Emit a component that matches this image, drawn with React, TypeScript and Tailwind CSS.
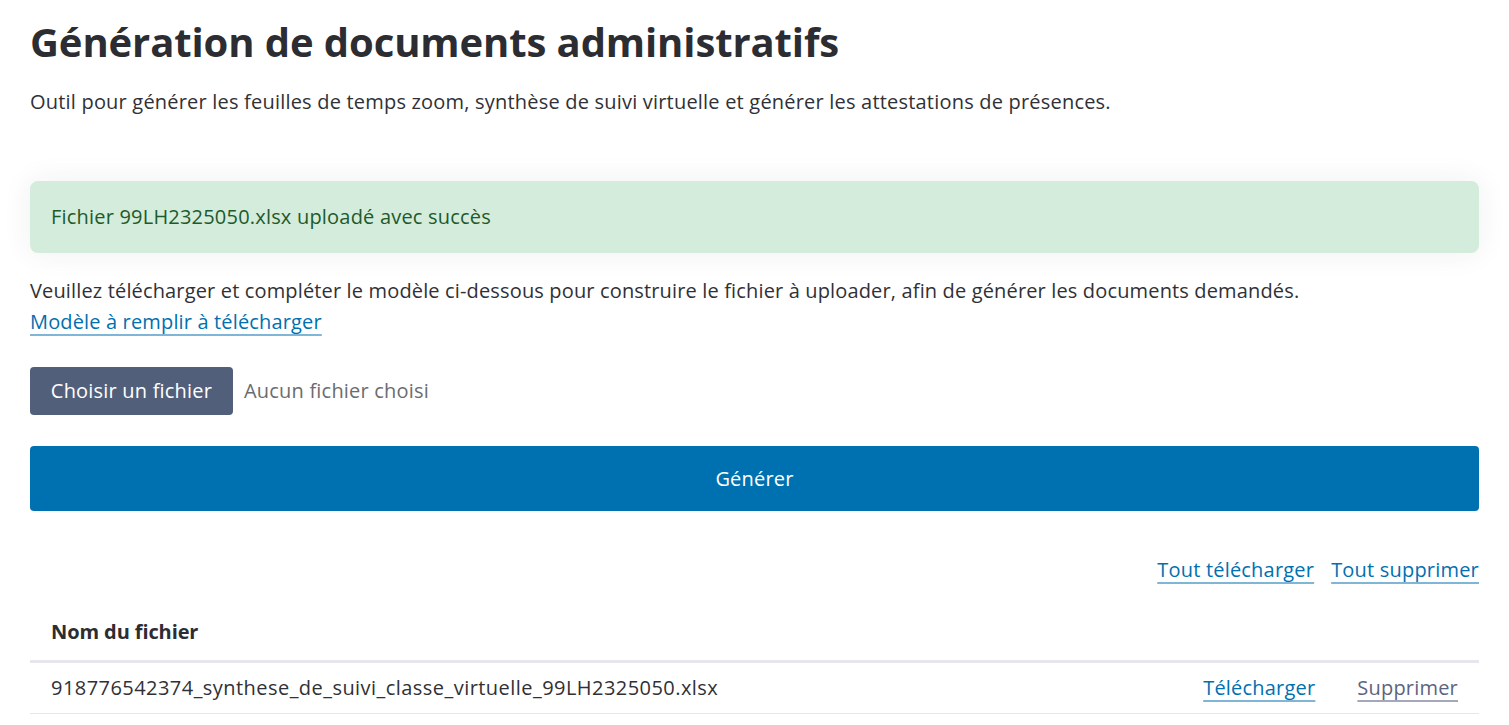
import React from "react";

const linkCls =
  "text-[#0070b0] underline decoration-[#7fb5d6] decoration-2 underline-offset-[5px]";

export default function App() {
  return (
    <div
      className="min-h-screen bg-white px-[30px] pt-[18px] text-[#303136] tracking-[0.2px]"
      style={{ fontFamily: '"Open Sans", "Noto Sans", sans-serif' }}
    >
      <h1 className="text-[40px] leading-[48px] font-bold tracking-[-0.1px] text-[#2c2d33]">
        Génération de documents administratifs
      </h1>
      <p className="mt-[22px] text-[20px] leading-[28px]">
        Outil pour générer les feuilles de temps zoom, synthèse de suivi virtuelle et générer les attestations de présences.
      </p>

      <div className="mt-[65px] flex h-[72px] items-center rounded-[8px] bg-[#d4ecdb] px-[21px] text-[20px] text-[#1d5a2c] shadow-[0_0_30px_rgba(40,40,100,0.07)]">
        Fichier 99LH2325050.xlsx uploadé avec succès
      </div>

      <p className="mt-[22px] text-[20px] leading-[31px] tracking-[0.15px]">
        Veuillez télécharger et compléter le modèle ci-dessous pour construire le fichier à uploader, afin de générer les documents demandés.
        <br />
        <a href="#" className={linkCls}>
          Modèle à remplir à télécharger
        </a>
      </p>

      <div className="mt-[30px] flex items-center gap-[11px]">
        <button className="h-[48px] w-[203px] rounded-[4px] bg-[#525f7a] text-[20px] tracking-[0.2px] text-white">
          Choisir un fichier
        </button>
        <span className="text-[20px] text-[#6b6c70]">Aucun fichier choisi</span>
      </div>

      <button className="mt-[31px] flex h-[65px] w-full items-center justify-center rounded-[4px] bg-[#0071b0] text-[20px] tracking-[0.2px] text-white">
        Générer
      </button>

      <div className="mt-[45px] flex justify-end gap-[17px] text-[20px] leading-[28px]">
        <a href="#" className={linkCls}>
          Tout télécharger
        </a>
        <a href="#" className={linkCls}>
          Tout supprimer
        </a>
      </div>

      <table className="mt-[21px] w-full border-collapse text-[20px]">
        <thead>
          <tr className="border-b-[3px] border-[#e6e7ee]">
            <th className="h-[56px] px-[21px] text-left font-bold tracking-[-0.1px] text-[#2c2d33]">Nom du fichier</th>
            <th className="px-[21px]"></th>
            <th className="px-[21px]"></th>
          </tr>
        </thead>
        <tbody>
          <tr className="border-b border-[#e6e7ee]">
            <td className="h-[52px] px-[21px] tracking-[0.45px]">918776542374_synthese_de_suivi_classe_virtuelle_99LH2325050.xlsx</td>
            <td className="w-[1px] whitespace-nowrap px-[21px]">
              <a href="#" className={linkCls}>
                Télécharger
              </a>
            </td>
            <td className="w-[1px] whitespace-nowrap px-[21px]">
              <a
                href="#"
                className="text-[#5c6480] underline decoration-[#a3a8ba] decoration-2 underline-offset-[5px]"
              >
                Supprimer
              </a>
            </td>
          </tr>
        </tbody>
      </table>
    </div>
  );
}
